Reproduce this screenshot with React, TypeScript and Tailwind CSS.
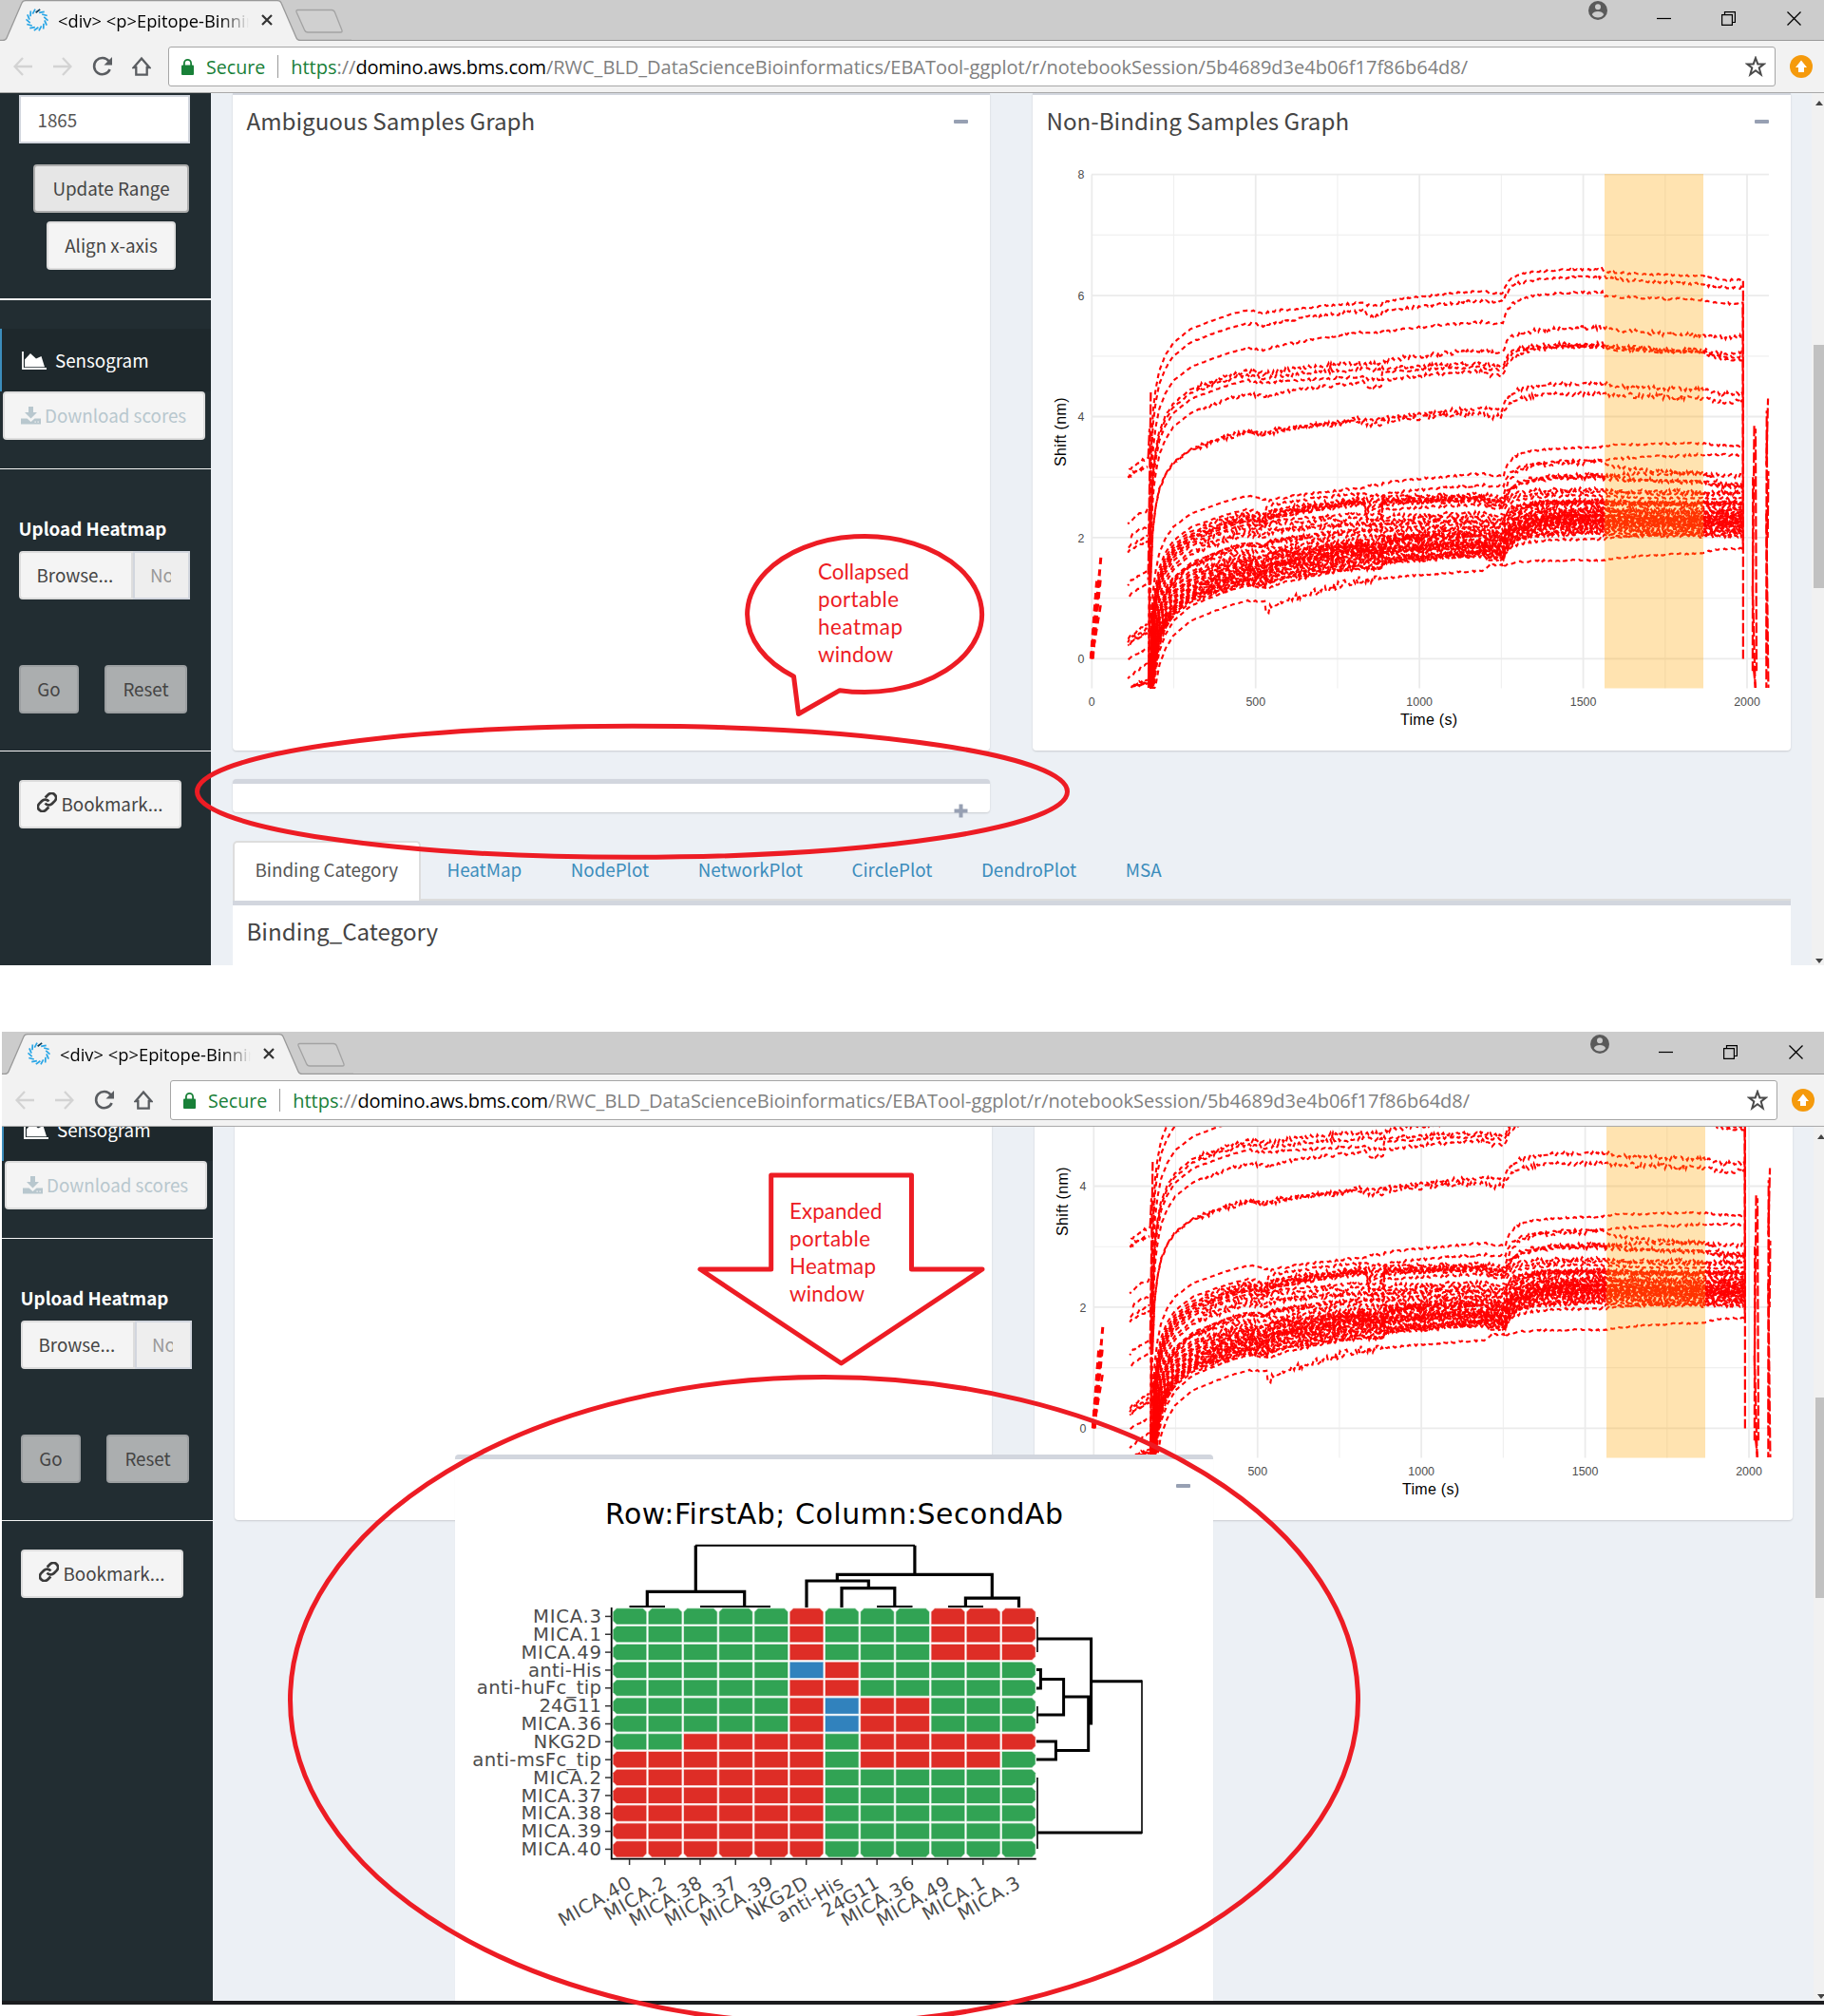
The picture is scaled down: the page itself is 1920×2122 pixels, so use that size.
import React from 'react';

/* ---------- sensogram data ---------- */

function makeRandom(seed: number) {
  let s = seed;
  return () => {
    s = (s * 1664525 + 1013904223) % 4294967296;
    return s / 4294967296;
  };
}

const px = (t: number) => 1149.3 + t * 0.34485;
const py = (v: number) => 693.4 - v * 63.72;

// Level of a trace at the phase boundaries:
// 475, 530, 536, 830, 885, 892, 1195, 1255, 1560, 1570, 1865, 1985 seconds
type Trace = { k: number[]; noise: number };

const BIG: Trace[] = [
  { k: [5.76, 5.71, 5.72, 5.88, 5.84, 5.9, 6.08, 6.04, 6.44, 6.4, 6.32, 6.26], noise: 0.014 },
  { k: [5.54, 5.5, 5.52, 5.75, 5.67, 5.74, 5.92, 5.9, 6.31, 6.3, 6.19, 6.13], noise: 0.022 },
  { k: [5.13, 5.1, 5.11, 5.4, 5.39, 5.4, 5.57, 5.54, 6.06, 6.0, 5.93, 5.87], noise: 0.016 },
  { k: [4.76, 4.7, 4.71, 4.9, 4.87, 4.92, 5.1, 5.07, 5.47, 5.46, 5.34, 5.31], noise: 0.032 },
  { k: [4.7, 4.63, 4.64, 4.79, 4.77, 4.79, 4.88, 4.83, 5.21, 5.18, 5.09, 5.05], noise: 0.03 },
  { k: [4.6, 4.55, 4.56, 4.66, 4.62, 4.74, 4.82, 4.78, 5.18, 5.16, 5.07, 4.98], noise: 0.018 },
  { k: [4.37, 4.33, 4.35, 4.57, 4.49, 4.6, 4.77, 4.68, 5.16, 5.12, 5.06, 4.94], noise: 0.024 },
  { k: [3.76, 3.73, 3.74, 3.97, 3.95, 3.97, 4.15, 4.12, 4.56, 4.54, 4.44, 4.38], noise: 0.03 },
  { k: [3.74, 3.71, 3.72, 3.93, 3.88, 3.92, 4.06, 4.0, 4.38, 4.38, 4.31, 4.25], noise: 0.036 },
];

const SMALL: Trace[] = [
  { k: [2.69, 2.63, 2.6, 2.83, 2.86, 2.9, 3.06, 3.03, 3.5, 3.52, 3.56, 3.52], noise: 0.014 },
  { k: [2.47, 2.38, 2.52, 2.74, 2.7, 2.72, 2.87, 2.86, 3.28, 3.28, 3.37, 3.37], noise: 0.018 },
  { k: [2.41, 2.34, 2.42, 2.66, 2.62, 2.66, 2.72, 2.68, 3.25, 3.2, 3.06, 3.02], noise: 0.03 },
  { k: [2.37, 2.3, 2.35, 2.62, 2.3, 2.62, 2.68, 2.62, 3.04, 3.02, 2.91, 2.86], noise: 0.03 },
  { k: [2.33, 2.24, 2.4, 2.58, 2.45, 2.58, 2.66, 2.58, 3.0, 3.03, 3.07, 2.88], noise: 0.026 },
  { k: [2.27, 2.18, 2.28, 2.6, 2.2, 2.54, 2.64, 2.54, 3.02, 2.97, 2.92, 2.84], noise: 0.022 },
  { k: [0.96, 0.94, 0.8, 1.32, 1.3, 1.32, 1.46, 1.55, 1.63, 1.63, 1.75, 1.82], noise: 0.012 },
  { k: [1.21, 1.16, 1.16, 1.52, 1.5, 1.58, 1.76, 1.68, 1.98, 1.98, 2.08, 2.12], noise: 0.016 },
];

const L475 = [2.32, 2.28, 2.22, 2.18, 2.1, 2.05, 1.92, 1.9, 1.88, 1.8, 1.72, 1.68, 1.66, 1.62, 1.58, 1.55, 1.53, 1.5, 1.48, 1.45, 1.42, 1.4, 1.38, 1.35, 1.32, 1.3, 1.28, 1.25, 1.6, 1.45, 1.24];
const L830 = [2.6, 2.55, 2.4, 2.33, 2.25, 2.22, 2.15, 2.12, 2.05, 1.98, 1.93, 1.91, 1.9, 1.88, 1.86, 1.84, 1.82, 1.8, 1.78, 1.76, 1.74, 1.72, 1.7, 1.67, 1.64, 1.6, 1.57, 1.54, 1.88, 1.8, 1.5];
const L1195 = [2.65, 2.6, 2.55, 2.4, 2.35, 2.3, 2.28, 2.24, 2.2, 2.16, 2.12, 2.1, 2.06, 2.04, 2.02, 1.98, 1.95, 1.93, 1.91, 1.9, 1.87, 1.85, 1.83, 1.8, 1.78, 1.76, 1.74, 1.72, 2.05, 1.9, 1.7];
const L1560 = [2.8, 2.76, 2.7, 2.62, 2.61, 2.6, 2.58, 2.55, 2.5, 2.47, 2.45, 2.43, 2.4, 2.38, 2.37, 2.35, 2.33, 2.31, 2.3, 2.28, 2.26, 2.25, 2.22, 2.2, 2.18, 2.15, 2.12, 2.1, 2.36, 2.3, 2.08];

function clump(): Trace[] {
  const rnd = makeRandom(77);
  return L475.map((a, i) => {
    const j = () => (rnd() - 0.5) * 0.04;
    const b = L830[i];
    const c = L1195[i];
    const d = L1560[i];
    return {
      k: [
        a, a - 0.04 + j(), a + 0.02 + j(), b, b - 0.03 + j(), b + (c - b) * 0.3 + j(),
        c, c - 0.05 + j(), d, d - 0.02 + j(), d - 0.04 + j(), d - 0.04 + j(),
      ],
      noise: 0.014 + rnd() * 0.026,
    };
  });
}

const RISE: [number, number][] = [
  [176, 3.2], [180, 2.5], [186, 1.7], [195, 1.3], [206, 1.0], [225, 0.74], [249, 0.54],
  [302, 0.31], [380, 0.15], [430, 0.06], [475, 0],
];

const JUMP: [number, number][] = [
  [0, 0], [6, 0.25], [14, 0.42], [28, 0.62], [50, 0.76], [100, 0.89], [180, 0.96], [305, 1],
];

function lerp(table: [number, number][], t: number) {
  for (let i = 1; i < table.length; i++) {
    if (t <= table[i][0]) {
      const [a, va] = table[i - 1];
      const [b, vb] = table[i];
      return va + ((vb - va) * (t - a)) / (b - a);
    }
  }
  return table[table.length - 1][1];
}

function tracePath(tr: Trace, seed: number, big: boolean) {
  const rnd = makeRandom(seed * 7919 + 13);
  const [k0, k1, k2, k3, k4, k5, k6, k7, k8, k9, k10, k11] = tr.k;
  const scale = big ? (k0 > 4 ? 1 : 0.95) : 0.85 + rnd() * 0.3;
  const at = (t: number) => {
    if (t <= 475) return k0 - lerp(RISE, t) * scale;
    if (t <= 530) return k0 + ((k1 - k0) * (t - 475)) / 55;
    if (t <= 536) return k2;
    if (t <= 830) return k2 + (k3 - k2) * Math.pow((t - 536) / 294, 0.75);
    if (t <= 885) return k3 + (k4 - k3) * Math.min(1, (t - 830) / 12);
    if (t <= 892) return k5;
    if (t <= 1195) return k5 + (k6 - k5) * Math.pow((t - 892) / 303, 0.8);
    if (t <= 1255) return k6 + (k7 - k6) * Math.min(1, (t - 1195) / 20);
    if (t <= 1560) {
      const base = k7 - 0.05 * (big ? 0 : 1);
      return base + (k8 - base) * lerp(JUMP, t - 1255);
    }
    if (t <= 1570) return k9;
    if (t <= 1865) return k9 + (k10 - k9) * Math.pow((t - 1570) / 295, 0.6);
    return k10 + (k11 - k10) * Math.min(1, (t - 1865) / 60);
  };
  const pts: string[] = [];
  const start = big ? 177 + rnd() * 3 : 180 + rnd() * 4;
  pts.push(`${px(start - 4).toFixed(1)} ${py(big ? 0.4 + rnd() * 2 : -0.48).toFixed(1)}`);
  for (let t = start; t <= 1988; t += t < 250 ? 3 : 4) {
    const noisy = t > 470 || (t > 320 && tr.noise > 0.022) ? 1.15 : 0.3;
    const low = tr.k[0] < 1 && t > 530 && t < 890 ? 0.055 : tr.noise;
    const v = Math.max(-0.48, at(t) + (rnd() - 0.5) * 2 * low * noisy);
    pts.push(`${px(t).toFixed(1)} ${py(v).toFixed(1)}`);
  }
  return 'M' + pts.join('L');
}

const LEAD: [number, number][] = [
  [3.08, 3.33], [2.97, 3.17], [3.0, 3.2], [2.22, 2.46], [1.97, 2.2], [1.8, 2.05], [1.73, 1.96], [1.23, 1.43],
  [1.0, 1.22], [0.32, 0.56], [0.27, 0.5], [0.22, 0.42], [0.19, 0.46], [-0.03, 0.18], [-0.35, -0.08],
  [-0.49, -0.38], [-0.47, -0.36], [-0.46, -0.42], [-0.48, -0.4],
];

function leadPath([a, b]: [number, number], i: number) {
  const rnd = makeRandom(i * 311 + 5);
  const pts: string[] = [];
  for (let t = i > 14 ? 120 : 110; t <= 172; t += 5) {
    const f = Math.pow((t - 110) / 62, 0.7);
    pts.push(`${px(t).toFixed(1)} ${py(a + (b - a) * f + (rnd() - 0.5) * 0.05).toFixed(1)}`);
  }
  return 'M' + pts.join('L');
}

const PATHS: string[] = [
  ...BIG.map((t, i) => tracePath(t, i + 1, true)),
  ...SMALL.map((t, i) => tracePath(t, i + 30, false)),
  ...clump().map((t, i) => tracePath(t, i + 60, false)),
  ...LEAD.map(leadPath),
];

const VERTICALS: [number, number, number, number][] = [
  [172, 3.3, 176, 3.8], [173, -0.48, 178, 2.2], [172, 1.3, 180, 4.4],
  [173, -0.45, 176, 0.8], [176, -0.48, 183, 0.9], [179, -0.48, 186, 0.7], [182, -0.46, 188, 0.6], [186, -0.46, 192, 0.4],
  [1988, 6.24, 1988, 0], [1987, 5.9, 1987.5, 1.8],
  [2022, 3.88, 2017, 1], [2018, 3.0, 2017, -0.2], [2026, 3.8, 2029, -0.2], [2019, -0.1, 2026, -0.48], [2017, 1.2, 2025, -0.48],
  [2064, 4.3, 2059, 3.2], [2060, 4.1, 2059, -0.48], [2061, 3.8, 2060, 0], [2059, 2.4, 2065, -0.48], [2065, 3.1, 2063, 2.0],
];

const INITIAL: { d: number[]; w: number }[] = [
  { d: [0, 0, 19, 1.35], w: 5 },
  { d: [0, 0, 28, 1.7], w: 3 },
  { d: [0, 0.02, 24, 1.32], w: 4.5 },
  { d: [0, 0, 29, 0.95], w: 2.5 },
];

const XT = [0, 500, 1000, 1500, 2000];
const XMINOR = [250, 750, 1250, 1750];
const YT = [0, 2, 4, 6, 8];
const YMINOR = [1, 3, 5, 7];

function SensogramChart() {
  return (
    <svg className="block h-[626px] w-[798px]" viewBox="1087 160 798 626">
      {XMINOR.map((t) => <path key={t} d={`M${px(t)} 183.7V724.5`} stroke="#f0f0f0" strokeWidth="1.2" />)}
      {YMINOR.map((v) => <path key={v} d={`M1149 ${py(v)}H1862`} stroke="#f0f0f0" strokeWidth="1.2" />)}
      {XT.map((t) => <path key={t} d={`M${px(t)} 183.7V724.5`} stroke="#ebebeb" strokeWidth="1.8" />)}
      {YT.map((v) => <path key={v} d={`M1149 ${py(v)}H1862`} stroke="#ebebeb" strokeWidth="1.8" />)}
      {PATHS.map((d, i) => (
        <path key={i} d={d} fill="none" stroke="#ff0000" strokeWidth="2.1" strokeDasharray="5 3.8" strokeDashoffset={i * 2.3} />
      ))}
      {VERTICALS.map(([a, b, c, d], i) => (
        <path key={i} d={`M${px(a)} ${py(b)}L${px(c)} ${py(d)}`} stroke="#ff0000" strokeWidth="2.2" strokeDasharray="11 3" strokeDashoffset={i * 4} />
      ))}
      {INITIAL.map(({ d: [a, b, c, d], w }, i) => (
        <path key={i} d={`M${px(a)} ${py(b)}L${px(c)} ${py(d)}`} stroke="#ff0000" strokeWidth={w} strokeDasharray="7 5.5" />
      ))}
      <rect x="1689" y="183" width="104" height="541.5" fill="#ffa500" fillOpacity="0.31" />
      <g fontFamily="'Liberation Sans', Arial, sans-serif" fontSize="12.4" fill="#4d4d4d">
        {XT.map((t) => <text key={t} x={px(t)} y="742.5" textAnchor="middle">{t}</text>)}
        {YT.map((v) => <text key={v} x="1141.5" y={py(v) + 4.6} textAnchor="end">{v}</text>)}
      </g>
      <g fontFamily="'Liberation Sans', Arial, sans-serif" fontSize="16" fill="#000000">
        <text x="1474" y="762.6" textLength="60">Time (s)</text>
        <text transform="translate(1121.6 491) rotate(-90)" textLength="72.5">Shift (nm)</text>
      </g>
    </svg>
  );
}

/* ---------- portable heatmap ---------- */

const ROWS = ['MICA.3', 'MICA.1', 'MICA.49', 'anti-His', 'anti-huFc_tip', '24G11', 'MICA.36', 'NKG2D', 'anti-msFc_tip', 'MICA.2', 'MICA.37', 'MICA.38', 'MICA.39', 'MICA.40'];
const COLS = ['MICA.40', 'MICA.2', 'MICA.38', 'MICA.37', 'MICA.39', 'NKG2D', 'anti-His', '24G11', 'MICA.36', 'MICA.49', 'MICA.1', 'MICA.3'];
const CELLS = [
  'GGGGGRGGGRRR', 'GGGGGRGGGRRR', 'GGGGGRGGGRRR', 'GGGGGBRGGGGG', 'GGGGGRRGGGGG', 'GGGGGRBRRGGG', 'GGGGGRBRRGGG',
  'GGRRRRGRRRRR', 'RRRRRRGRRRRG', 'RRRRRRGGGGGG', 'RRRRRRGGGGGG', 'RRRRRRGGGGGG', 'RRRRRRGGGGGG', 'RRRRRRGGGGGG',
];
const FILL: Record<string, string> = { G: '#31a354', R: '#de2d26', B: '#3182bd' };

const EM: Record<string, number> = {
  M: 0.843, I: 0.421, C: 0.698, A: 0.684, '.': 0.364, '-': 0.454, a: 0.601, n: 0.633, t: 0.394, i: 0.274, H: 0.751, s: 0.521,
  h: 0.633, u: 0.633, F: 0.575, c: 0.521, _: 0.636, p: 0.623, G: 0.775, N: 0.748, K: 0.693, D: 0.771, m: 0.973,
};
const labelWidth = (s: string) => [...s].reduce((w, ch) => w + (EM[ch] ?? 0.636), 0) * 19.75;

function cellPath(r: number, c: number) {
  const x = 645.6 + c * 37.22;
  const y = 1693.2 + r * 18.85;
  const w = 34.6;
  const h = 16.2;
  const k = 3.5;
  const tl = c === 0 || r === 0 ? k : 0;
  const tr = c === 11 || r === 0 ? k : 0;
  const br = c === 11 || r === 13 ? k : 0;
  const bl = c === 0 || r === 13 ? k : 0;
  return `M${x + tl} ${y}H${x + w - tr}L${x + w} ${y + tr}V${y + h - br}L${x + w - br} ${y + h}H${x + bl}L${x} ${y + h - bl}V${y + tl}Z`;
}

const TOP_TREE =
  'M732.3 1675.4V1626.8M962.9 1626.8V1657.4M681.3 1691V1675.4H783.7V1691M881.3 1664V1657.4H1044.3V1682.2' +
  'M1016.4 1691V1682.2H1072.5V1692M849 1692V1664H914.3V1671.6M886 1692V1671.6H941.8V1691';
const TOP_THIN = 'M732 1626.8H963M662.5 1691H700M737 1691H811M923 1691H960.5M998 1691H1035';
const SIDE_TREE =
  'M1202 1769.7H1148.6M1091.8 1725H1148.6V1814H1145.7M1119.6 1786H1145.7V1842.6H1111.4M1095.4 1767.4H1119.6V1805H1091.8' +
  'M1091 1757.6H1095.4V1777H1091M1091 1833H1111.4V1852H1091M1091.8 1929H1202';
const SIDE_THIN = 'M1202 1768.5V1930M1092 1702V1739M1092 1796V1814M1092 1871V1946';

function Heatmap() {
  return (
    <svg className="block h-[570px] w-[798px]" viewBox="479 1536 798 570">
      <text x="637" y="1603.8" textLength="482" fontFamily="'DejaVu Sans', Verdana, sans-serif" fontSize="29.9" fill="#000">
        Row:FirstAb; Column:SecondAb
      </text>
      <path d={TOP_TREE} fill="none" stroke="#000" strokeWidth="3.2" />
      <path d={TOP_THIN} fill="none" stroke="#000" strokeWidth="1.9" />
      <path d={SIDE_TREE} fill="none" stroke="#000" strokeWidth="3" />
      <path d={SIDE_THIN} fill="none" stroke="#000" strokeWidth="1.6" />
      {CELLS.map((row, r) =>
        row.split('').map((v, c) => (
          <path key={`${r}-${c}`} d={cellPath(r, c)} fill={FILL[v]} stroke={FILL[v]} strokeOpacity="0.35" strokeWidth="1.4" />
        )),
      )}
      <path d="M643.7 1692V1956.7H1090.7" fill="none" stroke="#000" strokeWidth="1.8" />
      <g fontFamily="'DejaVu Sans', Verdana, sans-serif" fontSize="19.7" fill="#4c4c4c">
        {ROWS.map((s, i) => (
          <React.Fragment key={s}>
            <path d={`M637 ${1701.4 + i * 18.85}H643.5`} stroke="#333" strokeWidth="1.5" />
            <text x={633 - labelWidth(s)} y={1708 + i * 18.85} textLength={labelWidth(s)}>{s}</text>
          </React.Fragment>
        ))}
        {COLS.map((s, i) => (
          <React.Fragment key={s}>
            <path d={`M${662.6 + i * 37.22} 1957V1963`} stroke="#333" strokeWidth="1.5" />
            <text transform={`translate(${666 + i * 37.22} 1986) rotate(-30)`} x={-labelWidth(s)} textLength={labelWidth(s)}>{s}</text>
          </React.Fragment>
        ))}
      </g>
    </svg>
  );
}

/* ---------- browser chrome ---------- */

function Favicon() {
  return (
    <svg className="h-6 w-6" viewBox="-12 -12 24 24">
      {Array.from({ length: 14 }, (_, i) => (
        <path
          key={i}
          d="M-2.2 -7.6L2 -11.4"
          transform={`rotate(${i * (360 / 14) + 6})`}
          stroke={i === 0 ? '#0d3c55' : '#27a5e6'}
          strokeWidth="1.7"
        />
      ))}
    </svg>
  );
}

function TabStrip() {
  return (
    <div className="relative flex h-[43px] border-b border-[#999999] bg-[#cccccc]">
      <svg className="absolute left-0 top-0 h-[43px] w-[370px]" viewBox="0 0 370 43">
        <path d="M0 43.5V42.5H3Q6 42.5 7 40L23 3Q24 .6 27 .6H292Q295 .6 296 3L312 40Q313 42.5 316 42.5V43.5Z" fill="#f2f2f2" />
        <path d="M0 42.5H3Q6 42.5 7 40L23 3Q24 .6 27 .6H292Q295 .6 296 3L312 40Q313 42.5 316 42.5H370" fill="none" stroke="#999999" strokeWidth="1.3" />
        <path d="M313.5 10.5H349Q351.5 10.5 352.5 13L360 32Q360.5 34 358.5 34H324Q321.5 34 320.5 31.5L312 12.5Q311.5 10.5 313.5 10.5Z" fill="#d0d0d0" stroke="#a3a3a3" strokeWidth="1.3" />
      </svg>
      <div className="relative flex items-center pl-[27px]">
        <Favicon />
        <span className="mt-[2px] ml-[10px] w-[201px] overflow-hidden whitespace-nowrap bg-gradient-to-r from-black from-85% to-transparent bg-clip-text font-['Open_Sans',sans-serif] text-[18.3px] leading-[30px] tracking-[0.03px] text-transparent">
          {'<div> <p>Epitope-Binnin'}
        </span>
        <svg className="ml-[13px] h-3 w-3" viewBox="0 0 12 12">
          <path d="M1 1L11 11M11 1L1 11" stroke="#333" strokeWidth="2.2" />
        </svg>
      </div>
      <div className="relative ml-auto flex">
        <svg className="mt-px mr-[52px] h-5 w-5" viewBox="0 0 20 20">
          <circle cx="10" cy="10" r="10" fill="#5a5a5a" />
          <circle cx="10" cy="6.3" r="3" fill="#cccccc" />
          <path d="M3.8 14.3Q5.5 11 10 11T16.2 14.3Q14 17.5 10 17.5T3.8 14.3Z" fill="#cccccc" />
        </svg>
        <svg className="mt-[11px] mr-[53px] h-4 w-[15px]" viewBox="0 0 15 16">
          <path d="M0 8.5H15" stroke="#000" strokeWidth="1.2" />
        </svg>
        <svg className="mt-[12px] mr-[54px] h-4 w-[15px]" viewBox="0 0 15 16">
          <path d="M.6 3.6H11.4V14.4H.6ZM3.5 3.5V.6H14.4V11.5H11.5" fill="none" stroke="#000" strokeWidth="1.2" />
        </svg>
        <svg className="mt-[12px] mr-[24px] h-[15px] w-[15px]" viewBox="0 0 15 15">
          <path d="M.5 .5L14.5 14.5M14.5 .5L.5 14.5" stroke="#000" strokeWidth="1.3" />
        </svg>
      </div>
    </div>
  );
}

function Toolbar() {
  return (
    <div className="flex h-[55px] items-start border-b border-[#a9a9a9] bg-[#f2f2f2]">
      <svg className="mt-[17px] ml-[14px] h-5 w-5" viewBox="0 0 20 20">
        <path d="M20 10H2M10 1L1.5 10L10 19" fill="none" stroke="#d3d3d3" strokeWidth="2.3" />
      </svg>
      <svg className="mt-[17px] ml-[22px] h-5 w-5" viewBox="0 0 20 20">
        <path d="M0 10H18M10 1L18.5 10L10 19" fill="none" stroke="#d3d3d3" strokeWidth="2.3" />
      </svg>
      <svg className="mt-[16px] ml-[21px] h-[22px] w-[22px]" viewBox="0 0 22 22">
        <path d="M17.6 5.5A8.6 8.6 0 1 0 18.6 14" fill="none" stroke="#5a5d61" strokeWidth="2.6" />
        <path d="M21 1V9.5H12.5Z" fill="#5a5d61" />
      </svg>
      <svg className="mt-[16px] ml-[20px] h-[22px] w-5" viewBox="0 0 20 22">
        <path d="M10 2.5L1.8 12H4.3V19.7H15.7V12H18.2Z" fill="none" stroke="#5a5d61" strokeWidth="2.3" />
      </svg>
      <div className="mt-[6px] ml-[18px] flex h-[42px] w-[1692px] items-center rounded-[3px] border border-[#a6a6a6] bg-white font-['Open_Sans',sans-serif] text-[20px] leading-[30px] whitespace-nowrap text-[#808080]">
        <svg className="ml-[13px] h-[17px] w-[13px]" viewBox="0 0 13 17">
          <rect y="6.5" width="13" height="10.5" rx="1" fill="#188038" />
          <path d="M2.9 7V4.5A3.6 3.6 0 0 1 10.1 4.5V7" fill="none" stroke="#188038" strokeWidth="1.8" />
        </svg>
        <span className="mt-[2px] ml-[13px] text-[19.6px] text-[#188038]">Secure</span>
        <span className="ml-[13px] h-6 w-px bg-[#999]" />
        <span className="mt-[2px] ml-[13px] text-[#188038]">https</span>
        <span className="mt-[2px]">://</span>
        <span className="mt-[2px] tracking-[-0.22px] text-black">domino.aws.bms.com</span>
        <span className="mt-[2px]">/RWC_BLD_DataScienceBioinformatics/EBATool-ggplot/r/notebookSession/5b4689d3e4b06f17f86b64d8/</span>
        <svg className="mr-[9px] ml-auto h-[22px] w-[22px]" viewBox="0 0 22 22">
          <path d="M11 2L13.3 8.4H20L14.7 12.5L16.7 19.5L11 15.3L5.3 19.5L7.3 12.5L2 8.4H8.7Z" fill="none" stroke="#4a4a4a" strokeWidth="2" />
        </svg>
      </div>
      <svg className="mt-[15px] ml-[15px] h-6 w-6" viewBox="0 0 24 24">
        <circle cx="12" cy="12" r="12" fill="#f59a0c" />
        <path d="M12 5.5L18 13H15V18H9V13H6Z" fill="#fff" />
      </svg>
    </div>
  );
}

/* ---------- application ---------- */

function AreaChartIcon() {
  return (
    <svg className="h-[19px] w-[26px] shrink-0" viewBox="0 0 26 19">
      <path d="M1 0V18H26" fill="none" stroke="#fff" strokeWidth="1.8" />
      <path d="M3 16.200V8.500L9 2L15 7.500L20.500 5L24 16.200Z" fill="#fff" />
    </svg>
  );
}

function DownloadIcon() {
  return (
    <svg className="h-[19px] w-[21px] shrink-0" viewBox="0 0 21 19" fill="#b8c7ce">
      <path d="M8 0H13V6H17L10.5 12.5L4 6H8Z" />
      <path d="M0 12.5H6.5L10.5 16L14.5 12.5H21V18.5H0ZM14.5 15.5V16.7H15.8V15.5ZM17.5 15.5V16.7H18.8V15.5Z" fillRule="evenodd" />
    </svg>
  );
}

function Sidebar() {
  return (
    <div className="w-[222px] shrink-0 bg-[#222d32] text-[18.8px] text-[#444444]">
      <div className="mt-[2px] ml-5 flex h-[51px] w-[180px] items-center border-2 border-[#d2d6de] bg-white pt-px pl-[17.5px] text-[#555555]">1865</div>
      <div className="mt-[22px] ml-[35px] flex h-[51px] w-[164px] items-center justify-center rounded-[4px] border-2 border-[#adadad] bg-[#e6e6e6]">Update Range</div>
      <div className="mt-[9px] ml-[49px] flex h-[51px] w-[136px] items-center justify-center rounded-[4px] border-2 border-[#dddddd] bg-[#f4f4f4]">Align x-axis</div>
      <div className="mt-[30px] h-[2px] bg-[#f4f4f4]" />
      <div className="mt-[30px] flex h-[66px] items-center border-l-2 border-[#3c8dbc] bg-[#1e282c] pl-[21px] text-white">
        <AreaChartIcon />
        <span className="ml-[9px]">Sensogram</span>
      </div>
      <div className="ml-[3px] flex h-[51px] w-[213px] items-center rounded-[4px] border-2 border-[#dddddd] bg-[#f4f4f4] pb-px pl-[17px] text-[#b8c7ce]">
        <DownloadIcon />
        <span className="ml-[4px]">Download scores</span>
      </div>
      <div className="mt-[30px] h-px bg-[#f4f4f4]" />
      <div className="mt-[48px] ml-[19.5px] h-[27px] leading-[28px] font-bold text-white">Upload Heatmap</div>
      <div className="mt-[11px] ml-5 flex h-[51px] w-[180px]">
        <div className="flex w-[120px] items-center rounded-l-[4px] border-2 border-[#dddddd] bg-[#f4f4f4] pb-px pl-[16.5px]">Browse...</div>
        <div className="flex flex-1 items-center border-2 border-[#d2d6de] bg-[#eeeeee] pl-4 text-[#999999]">
          <span className="w-[22px] overflow-hidden whitespace-nowrap">No file</span>
        </div>
      </div>
      <div className="mt-[69px] ml-5 flex gap-[27px]">
        <div className="flex h-[51px] w-[63px] items-center justify-center rounded-[4px] border-2 border-[#9c9fa1] bg-[#abaeaf] pb-px">Go</div>
        <div className="flex h-[51px] w-[87px] items-center justify-center rounded-[4px] border-2 border-[#9c9fa1] bg-[#abaeaf] pb-px">Reset</div>
      </div>
      <div className="mt-[39px] h-px bg-[#f4f4f4]" />
      <div className="mt-[30px] ml-5 flex h-[51px] w-[171px] items-center rounded-[4px] border-2 border-[#dddddd] bg-[#f4f4f4] pl-[17px]">
        <svg className="mb-[4px] h-[21px] w-[21px] shrink-0" viewBox="1 1 22 22" fill="none" stroke="#3a3a3a" strokeWidth="2.9">
          <path d="M10 13a5 5 0 0 0 7.54 .54l3-3a5 5 0 0 0-7.07-7.07l-3.400 3.400" />
          <path d="M14 11a5 5 0 0 0-7.54-.54l-3 3a5 5 0 0 0 7.07 7.07l3.400-3.400" />
        </svg>
        <span className="ml-[4.5px]">Bookmark...</span>
      </div>
    </div>
  );
}

function Dash() {
  return <span className="mt-[2px] h-[4px] w-[15px] rounded-[1px] bg-[#97a0b3]" />;
}

function CardHeader({ title }: { title: string }) {
  return (
    <div className="mb-[6px] flex h-[54px] items-center pr-[23.5px] pl-[14.5px]">
      <span className="text-[24.15px] leading-[34px] text-[#444444]">{title}</span>
      <span className="flex-1" />
      <Dash />
    </div>
  );
}

const TABS = ['HeatMap', 'NodePlot', 'NetworkPlot', 'CirclePlot', 'DendroPlot', 'MSA'];

function Dashboard({ expanded }: { expanded: boolean }) {
  return (
    <div className="flex-1 pl-[23px]">
      <div className="flex gap-[45px]">
        <div className="h-[692px] w-[797px] rounded-b-[4px] border-t-2 border-[#d2d6de] bg-white shadow-[0_1px_2px_rgba(0,0,0,0.15)]">
          <CardHeader title="Ambiguous Samples Graph" />
        </div>
        <div className="h-[692px] w-[798px] rounded-b-[4px] border-t-2 border-[#d2d6de] bg-white shadow-[0_1px_2px_rgba(0,0,0,0.15)]">
          <CardHeader title="Non-Binding Samples Graph" />
          <SensogramChart />
        </div>
      </div>
      {!expanded && (
        <>
          <div className="relative mt-[30px] h-[35px] w-[797px] rounded-[4px] border-t-[5px] border-[#d2d6de] bg-white shadow-[0_1px_2px_rgba(0,0,0,0.15)]">
            <svg className="absolute top-[20.5px] right-[23.5px] h-[15px] w-[15px]" viewBox="0 0 15 15">
              <path d="M7.5 .5V14.5M.5 7.5H14.5" stroke="#97a0b3" strokeWidth="4" />
            </svg>
          </div>
          <div className="mt-[30px] flex h-[63px] w-[1640px] items-end text-[18.8px] leading-[27px] text-[#3c8dbc]">
            <div className="h-[63px] w-[198px] rounded-t-[5px] border-2 border-b-0 border-[#dddddd] bg-white pt-[14px] pl-[21.5px] whitespace-nowrap text-[#555555]">Binding Category</div>
            <div className="flex h-[63px] flex-1 gap-[51.6px] border-b-2 border-[#dddddd] pt-[16px] pl-[27.5px]">
              {TABS.map((t) => <span key={t}>{t}</span>)}
            </div>
          </div>
          <div className="h-[80px] w-[1640px] border-t-[5px] border-[#d2d6de] bg-white pt-[9px] pl-[14.5px] text-[24.15px] leading-[36px] text-[#444444]">Binding_Category</div>
        </>
      )}
    </div>
  );
}

function ScrollBar({ expanded }: { expanded: boolean }) {
  return (
    <div className="relative flex w-[13px] shrink-0 flex-col items-center justify-between bg-[#f1f1f1] py-[8px]">
      <span className="ml-[3px] border-x-[4px] border-b-[5px] border-x-transparent border-b-[#444]" />
      {expanded ? (
        <span className="absolute top-[285px] right-0 h-[211px] w-[11px] bg-[#c1c1c1]" />
      ) : (
        <span className="absolute top-[265px] right-0 h-[256px] w-[11px] bg-[#c1c1c1]" />
      )}
      <span className="ml-[3px] -mb-[6px] border-x-[4px] border-t-[5px] border-x-transparent border-t-[#444]" />
    </div>
  );
}

function BrowserWindow({ expanded = false }: { expanded?: boolean }) {
  return (
    <div className="w-[1920px]">
      <TabStrip />
      <Toolbar />
      <div className={expanded ? 'relative flex h-[920px] overflow-hidden bg-[#ecf0f5]' : 'relative flex h-[918px] overflow-hidden bg-[#ecf0f5]'}>
        <div className="w-[222px] shrink-0 bg-[#222d32]">
          <div className={expanded ? '-mt-[278px] flow-root' : 'flow-root'}><Sidebar /></div>
        </div>
        <div className="flex-1">
          <div className={expanded ? '-mt-[278px]' : ''}><Dashboard expanded={expanded} /></div>
        </div>
        <ScrollBar expanded={expanded} />
        {expanded && (
          <div className="absolute top-[345px] left-[477px] h-[600px] w-[798px] rounded-t-[4px] border-t-[5px] border-[#d2d6de] bg-white shadow-[0_1px_1px_rgba(0,0,0,0.1)]">
            <svg className="absolute top-[26px] right-[24px] h-[4px] w-[15px]" viewBox="0 0 15 4">
              <rect width="15" height="4" rx="1" fill="#97a0b3" />
            </svg>
            <Heatmap />
          </div>
        )}
      </div>
    </div>
  );
}

function Annotations() {
  return (
    <svg className="pointer-events-none absolute inset-0 h-[2122px] w-[1920px]" viewBox="0 0 1920 2122">
      <g fill="none" stroke="#ed1c24" strokeWidth="5">
        <ellipse cx="665.5" cy="833.3" rx="458" ry="69" />
        <path d="M835.5 711.9A123.500 82 0 1 1 884 726.700L840.5 751.500Z" strokeLinejoin="round" />
        <path d="M811.7 1237H959.5V1336H1034L885.5 1435L737 1336H811.7Z" strokeLinejoin="round" />
        <ellipse cx="867.5" cy="1789.500" rx="562" ry="340" />
      </g>
      <g fill="#ed1c24" fontFamily="Lato, Carlito, sans-serif" fontSize="22.4">
        <text x="861" y="609.500" textLength="96">Collapsed</text>
        <text x="861" y="638.500" textLength="85">portable</text>
        <text x="861" y="667.500" textLength="89">heatmap</text>
        <text x="861" y="696.500" textLength="79">window</text>
        <text x="831" y="1282.500" textLength="97.500">Expanded</text>
        <text x="831" y="1311.500" textLength="85">portable</text>
        <text x="831" y="1340.500" textLength="91">Heatmap</text>
        <text x="831" y="1369.500" textLength="79">window</text>
      </g>
    </svg>
  );
}

export default function App() {
  return (
    <div className="relative h-[2122px] w-[1920px] overflow-hidden bg-white font-['Noto_Sans_CJK_SC',sans-serif]">
      <BrowserWindow />
      <div className="mt-[70px] ml-[2px] w-[1918px] overflow-hidden bg-[#cccccc] pt-[2px]">
        <BrowserWindow expanded />
        <div className="h-[4px] bg-[#1b1c1f]" />
      </div>
      <Annotations />
    </div>
  );
}
